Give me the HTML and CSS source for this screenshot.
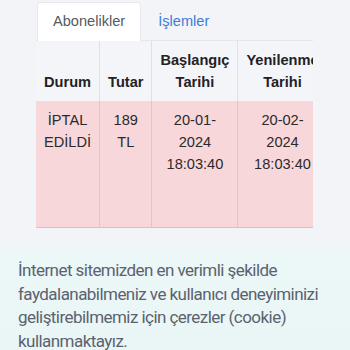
FILE: index.html
```html
<!DOCTYPE html>
<html lang="tr">
<head>
<meta charset="utf-8">
<link rel="stylesheet" href="styles.css">
</head>
<body>
<div class="page">
  <ul class="tabs">
    <li class="tab active">Abonelikler</li>
    <li class="tab link">İşlemler</li>
  </ul>
  <div class="table-wrap">
    <table class="subs">
      <thead>
        <tr>
          <th>Durum</th>
          <th>Tutar</th>
          <th>Başlangıç<br>Tarihi</th>
          <th>Yenilenme<br>Tarihi</th>
          <th>İşlem</th>
        </tr>
      </thead>
      <tbody>
        <tr class="danger">
          <td>İPTAL<br>EDİLDİ</td>
          <td>189<br>TL</td>
          <td>20-01-<br>2024<br>18:03:40</td>
          <td>20-02-<br>2024<br>18:03:40</td>
          <td>Detay</td>
        </tr>
      </tbody>
    </table>
  </div>
</div>
<div class="cookie">
  <p class="cookie-text">İnternet sitemizden en verimli şekilde faydalanabilmeniz ve kullanıcı deneyiminizi geliştirebilmemiz için çerezler (cookie) kullanmaktayız.</p>
</div>
</body>
</html>
```
FILE: styles.css
```css
html, body {
  margin: 0;
  padding: 0;
  background: #f3f4f8;
  overflow: hidden;
  height: 350px;
}
body {
  font-family: "Liberation Sans", Arial, sans-serif;
  font-size: 14.6px;
  line-height: 22px;
  color: #212529;
  position: relative;
}
.page {
  padding: 2px 0 0 36px;
}
.tabs {
  list-style: none;
  margin: 0;
  padding: 0 0 0 1px;
  display: flex;
  width: 276px;
  border-bottom: 1px solid #e4e6ec;
}
.tab {
  padding: 0 15px;
  height: 37px;
  line-height: 37px;
  font-size: 14.6px;
  margin-bottom: -1px;
  border: 1px solid transparent;
  border-bottom: 0;
  border-radius: 4px 4px 0 0;
}
.tab.active {
  background: #ffffff;
  color: #555a60;
  border-color: #e8e9ee;
  height: 38px;
}
.tab.link {
  color: #3b7dd8;
  padding-left: 16px;
}
.table-wrap {
  width: 277px;
  overflow: hidden;
}
.subs {
  border-collapse: collapse;
  white-space: nowrap;
}
.subs th, .subs td {
  padding: 8px 8px;
  text-align: center;
  border-left: 1px solid #dfe1e6;
}
.subs th:first-child, .subs td:first-child {
  border-left: 0;
}
.subs thead th {
  background: #f4f5f9;
  font-weight: bold;
  vertical-align: bottom;
  color: #1f2226;
}
.subs tbody td {
  background: #f8d7da;
  color: #2a2a2a;
  vertical-align: top;
  height: 110px;
  border-left-color: #e6c3c7;
  border-bottom: 1px solid #e2bcc1;
}
.cookie {
  position: absolute;
  left: 0;
  right: 0;
  top: 240px;
  height: 140px;
  background: linear-gradient(to bottom, #f3f4f8 0, #ecf7f7 14px, #e9f6f6 100%);
  padding: 19px 4px 0 18px;
}
.cookie-text {
  margin: 0;
  font-family: Roboto, "Noto Sans", sans-serif;
  font-size: 17px;
  letter-spacing: -0.55px;
  line-height: 23.7px;
  color: #5a6270;
}
```
